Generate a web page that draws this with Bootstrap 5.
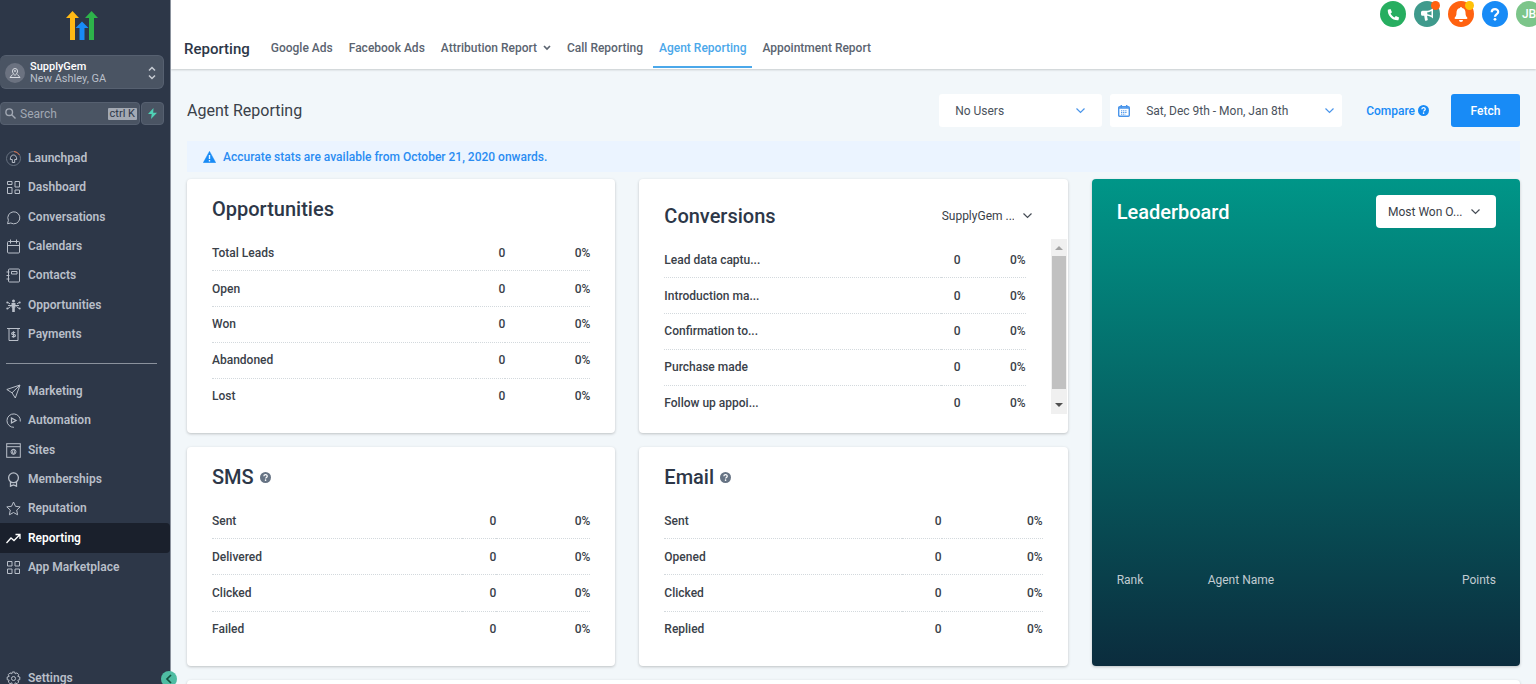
<!DOCTYPE html>
<html lang="en">
<head>
<meta charset="utf-8">
<meta name="viewport" content="width=device-width, initial-scale=1">
<title>Agent Reporting</title>
<link href="https://cdn.jsdelivr.net/npm/bootstrap@5.3.0/dist/css/bootstrap.min.css" rel="stylesheet">
<style>
  body { font-family: Roboto, "Liberation Sans", sans-serif; font-size: 12px; line-height: 16px; color: #3a4149; background: #f2f7fa; }
  svg { display: block; flex: none; }
  button, select, input { font: inherit; }
  .app-shell { height: 100vh; overflow: hidden; }

  /* Sidebar */
  .side { width: 171px; flex: none; background: #2d3748; border-right: 1px solid #8b929d; color: #b9bfc9; position: relative; }
  .side-logo { padding: 11px 7px 15px 0; }
  .side-box { background: #4a5463; border: 1px solid #566070; }
  .account { width: 164px; height: 34px; border-radius: 6px; border-left: 0; color: #b9bfc9; line-height: 12px; padding: 1px 7px 0 5px; text-align: left; gap: 5px; }
  .account b { color: #fff; font-weight: 500; font-size: 11px; }
  .account small { font-size: 11px; }
  .account-pin { width: 20px; height: 20px; border-radius: 50%; background: #6b7280; }
  .search-wrap { width: 164px; margin-top: 13px; gap: 1px; }
  .search-box { height: 23px; border-radius: 4px; padding: 0 2px 0 4px; min-width: 0; }
  .search-box input { min-width: 0; width: 10px; background: none; border: 0; color: #fff; padding: 0 0 0 4px; outline: 0; }
  .search-box input::placeholder { color: #a1a8b3; opacity: 1; }
  .search-box kbd { background: #a3a9b3; color: #2d3748; font: 400 11px/12px Roboto, sans-serif; padding: 0 2px; border-radius: 1px; }
  .bolt { width: 23px; height: 23px; border-radius: 4px; color: #4fd1b5; padding: 0; }
  .side-list { display: grid; grid-auto-rows: 1fr; height: 206px; }
  .side-main { margin-top: 18px; }
  .side-link { color: #b9bfc9; font-weight: 600; text-decoration: none; padding: 0 6px; gap: 7px; border-radius: 0 4px 4px 0; }
  .side-link:hover { color: #fff; }
  .side-link.current { background: #1a202c; color: #fff; }
  .side-link svg { width: 15px; height: 15px; margin-top: 1px; fill: none; stroke: currentColor; stroke-width: 1; }
  .side-rule { margin: 14px 13px 12px 6px; border-top: 1px solid #8b929d; opacity: 1; }
  .side-foot { height: 21px; overflow: visible; }
  .side-foot .side-link { height: 29px; }
  .collapse-btn { position: absolute; right: -7px; bottom: -3px; width: 16px; height: 16px; border-radius: 50%; border: 0; background: #4fbda3; color: #12513f; padding: 0; z-index: 2; }

  /* Header */
  .top-head { background: #fff; box-shadow: 0 1px 2px rgba(0,0,0,.18); height: 69px; }
  .quick { gap: 8px; padding-top: 1px; margin-right: -6px; height: 29px; }
  .quick-btn { width: 26px; height: 26px; border: 0; border-radius: 50%; padding: 0; color: #fff; position: relative; flex: none; }
  .quick-btn i { position: absolute; right: 0; top: 0; width: 9px; height: 9px; border-radius: 50%; }
  .bg-call { background: #27ae60; } .bg-news { background: #3f9a8c; } .bg-bell { background: #ff6210; } .bg-help { background: #188bf6; } .bg-user { background: #7cc58a; }
  .tabs { height: 39px; padding-left: 13px; gap: 4px; }
  .tabs h1 { font-size: 15px; line-height: 18px; font-weight: 500; color: #2d3748; margin: 0 11px 0 0; }
  .tab-link { height: 100%; padding: 0 6px; color: #5b6470; font-weight: 500; text-decoration: none; border: 0; background: none; border-bottom: 2px solid transparent; gap: 6px; }
  .tab-link.current { color: #4ba8ea; border-color: #4ba8ea; }

  /* Page */
  .page { padding: 25px 16px 0 16px; }
  .page h2 { font-size: 16px; line-height: 20px; font-weight: 400; color: #3a4149; }
  .filter { height: 33px; border: 0; border-radius: 3px; background-color: #fff; color: #4a525c; font-size: 12px; text-align: left; }
  .filter-users { width: 163px; padding: 0 36px 0 16px; margin-right: 8px; background-size: 11px 11px; background-position: right 16px center; }
  .filter-date { width: 232px; padding: 0 7px 0 8px; margin-right: 24px; }
  .arrow-blue { background-image: url("data:image/svg+xml,%3csvg xmlns='http://www.w3.org/2000/svg' viewBox='0 0 11 11'%3e%3cpath d='M1.5 3.5l4 4 4-4' fill='none' stroke='%234a95ea' stroke-width='1.2'/%3e%3c/svg%3e"); }
  .arrow-dark { background-image: url("data:image/svg+xml,%3csvg xmlns='http://www.w3.org/2000/svg' viewBox='0 0 11 11'%3e%3cpath d='M1.5 3.5l4 4 4-4' fill='none' stroke='%23454c55' stroke-width='1.2'/%3e%3c/svg%3e"); }
  .compare { color: #188bf6; font-weight: 500; text-decoration: none; margin-right: 22px; gap: 3px; }
  .fetch { width: 69px; height: 33px; border: 0; border-radius: 3px; background: #188bf6; color: #fff; font-weight: 500; }
  .notice { margin: 14px 0 7px; height: 31px; padding: 0 16px; gap: 7px; background: #ebf4ff; color: #2a8cf2; font-weight: 500; }
  .tiles { --bs-gutter-x: 24px; --bs-gutter-y: 14px; }
  .tile { background: #fff; border-radius: 4px; box-shadow: 0 1px 3px rgba(0,0,0,.22); padding: 18px 25px 20px; height: 100%; }
  .tile h3 { font-size: 20px; line-height: 24px; font-weight: 500; color: #2d3748; margin: 0; }
  .tile-title { margin-bottom: 15px; gap: 6px; }
  .stats { width: 100%; font-weight: 500; }
  .stats th { font-weight: 500; }
  .stats th, .stats td { padding: 0; vertical-align: middle; }
  .stats tr + tr > * { border-top: 1px dotted #d3d9dd; }
  .stats td { text-align: right; }
  .five { height: 177px; } .four { height: 142px; }
  .w-a td:last-child { width: 85px; } .w-b td:last-child { width: 94px; } .w-c td:last-child { width: 65px; } .w-d td:last-child { width: 101px; }
  .tile-conv { padding: 20px 1px 0 25px; }
  .conv-head { padding-right: 33px; height: 33px; margin-bottom: 7px; }
  .pick { width: 120px; height: 33px; border: 0; border-radius: 4px; background-color: #fff; color: #3a4149; font-size: 12px; padding: 0 34px 0 12px; background-size: 11px 11px; background-position: right 15px center; }
  .pick-plain { width: 94px; background-position: right 1px center; padding: 0 20px 0 2px; }
  .conv-scroll { height: 175px; overflow: hidden; gap: 25px; }
  .conv-scroll .stats { margin-top: 4px; }
  .bar-track { width: 16px; height: 175px; background: #f0f0f0; flex: none; }
  .bar-thumb { width: 14px; height: 133px; background: #c1c1c1; }
  .leader { background: linear-gradient(#009688, #0b2c3d); color: #fff; padding: 16px 24px 78px 25px; }
  .leader h3 { color: #fff; }
  .leader-table { width: 100%; }
  .leader-table th { font-weight: 400; padding: 0; color: #c1ccd2; }
</style>
</head>
<body>
<svg class="d-none" aria-hidden="true">
  <symbol id="q" viewBox="0 0 16 16"><circle cx="8" cy="8" r="8" fill="currentColor"/><path d="M5.6 6.2c.1-3 4.9-3 4.9-.1 0 1.8-2.3 1.7-2.3 3.4" fill="none" stroke="#fff" stroke-width="1.8"/><circle cx="8.1" cy="11.9" r="1.2" fill="#fff"/></symbol>
</svg>
<div class="app-shell d-flex">
  <aside class="side d-flex flex-column">
    <div class="side-logo d-flex justify-content-center">
      <svg width="34" height="29" viewBox="0 0 34 29" role="img" aria-label="Logo">
        <path d="M5 29V7H1L7.500 0 14 7h-4v22z" fill="#ffb914"/><path d="M24 29V7h-4L26.500 0 33 7h-4v22z" fill="#2db34a"/><path d="M14.500 29V17H10.500L17 10.500 23.500 17h-4v12z" fill="#188bf6"/>
      </svg>
    </div>
    <button type="button" class="account side-box d-flex align-items-center">
      <span class="account-pin d-flex align-items-center justify-content-center"><svg width="12" height="12" viewBox="0 0 12 12" fill="none" stroke="#d8dce2"><path d="M6 8.500C4 6.500 3.500 5.500 3.500 4a2.500 2.500 0 0 1 5 0C8.500 5.500 8 6.500 6 8.500z"/><circle cx="6" cy="4" r=".6"/><path d="M3.500 7.500L1 10.500h10L8.500 7.500"/></svg></span>
      <span class="d-flex flex-column flex-fill"><b>SupplyGem</b><small>New Ashley, GA</small></span>
      <svg width="8" height="14" viewBox="0 0 8 14" fill="none" stroke="#c6cbd3" stroke-width="1.500"><path d="M1 4.500l3-3 3 3M1 9.500l3 3 3-3"/></svg>
    </button>
    <div class="search-wrap d-flex">
      <label class="search-box side-box d-flex align-items-center flex-fill">
        <svg width="11" height="11" viewBox="0 0 11 11" fill="none" stroke="#a1a8b3" stroke-width="1.400"><circle cx="4.200" cy="4.200" r="3.300"/><path d="M6.700 6.700l3.800 3.800"/></svg>
        <input type="text" class="flex-fill" placeholder="Search" aria-label="Search"><kbd>ctrl K</kbd>
      </label>
      <button type="button" class="bolt side-box d-flex align-items-center justify-content-center" aria-label="Quick actions"><svg width="11" height="11" viewBox="0 0 11 11" fill="currentColor"><path d="M6.500 0L1 6h3.700l-.7 5L10 4.700H6.200z"/></svg></button>
    </div>
    <nav class="d-flex flex-column flex-fill" aria-label="Main">
      <div class="side-list side-main">
        <a href="#" class="side-link d-flex align-items-center"><svg viewBox="0 0 15 15"><circle cx="7.500" cy="7.500" r="7" stroke="#66707f"/><path d="M8 .5a7 7 0 0 1 5.500 3.500" stroke="#d9714a"/><path d="M6.300 11.500V8.500H4.300c0-3 1.300-4.500 3.200-4.500s3.200 1.500 3.200 4.500H8.700v3z"/></svg>Launchpad</a>
        <a href="#" class="side-link d-flex align-items-center"><svg viewBox="0 0 15 15" stroke-width="1.200"><path d="M1.500 1.500h4.500v3h-4.500zM9 1.500h4.500v5.500h-4.500zM1.500 7.500h4.500v6h-4.500zM9 10h4.500v3.500h-4.500z"/></svg>Dashboard</a>
        <a href="#" class="side-link d-flex align-items-center"><svg viewBox="0 0 15 15"><path d="M1.500 13.700l.9-3.300A6 6 0 1 1 4.800 13z"/></svg>Conversations</a>
        <a href="#" class="side-link d-flex align-items-center"><svg viewBox="0 0 15 15"><rect x="1.500" y="2.500" width="12" height="11.500" rx="1"/><path d="M1.500 6.500h12M4.500.5v4M10.500.5v4"/></svg>Calendars</a>
        <a href="#" class="side-link d-flex align-items-center"><svg viewBox="0 0 15 15"><rect x="2.500" y="1" width="11" height="13" rx="1"/><path d="M5.500 3.500h5.500v2.500H5.500zM.5 4h3M.5 7.500h3M.5 11h3"/></svg>Contacts</a>
        <a href="#" class="side-link d-flex align-items-center"><svg viewBox="0 0 15 15"><g fill="currentColor" stroke="none"><circle cx="7.500" cy="3" r="1.500"/><path d="M5.500 5h4v4.500h-.7V14H6.200V9.500h-.7z"/><circle cx="1.300" cy="4.500" r="1"/><circle cx="1.300" cy="10.500" r="1"/><circle cx="13.700" cy="4.500" r="1"/><circle cx="13.700" cy="10.500" r="1"/></g><path d="M2 7.500h11M2 10.500l2.500-2M13 10.500l-2.500-2M2 4.500l2 1.500M13 4.500l-2 1.500"/></svg>Opportunities</a>
        <a href="#" class="side-link d-flex align-items-center"><svg viewBox="0 0 15 15"><path d="M1 1.500h13M3 1.500v12h9v-12"/><path d="M9.200 5.500H6.700a1 1 0 0 0 0 2h1.600a1 1 0 0 1 0 2.200H5.800M7.500 4.300v6.500" stroke-width="1.200"/></svg>Payments</a>
      </div>
      <hr class="side-rule">
      <div class="side-list">
        <a href="#" class="side-link d-flex align-items-center"><svg viewBox="0 0 15 15"><path d="M14 1L.8 5.500l5.200 3.300L9.300 14zM14 1L6 8.800"/></svg>Marketing</a>
        <a href="#" class="side-link d-flex align-items-center"><svg viewBox="0 0 15 15"><path d="M8 14.300A6.700 6.700 0 1 1 14.300 8.500"/><path d="M5.500 5l4.500 2.500-4.500 2.500z" stroke-width="1.300"/></svg>Automation</a>
        <a href="#" class="side-link d-flex align-items-center"><svg viewBox="0 0 15 15"><rect x=".7" y=".7" width="13.600" height="13.600"/><path d="M.7 3.700h13.600"/><circle cx="7.500" cy="8.800" r="2.500"/><path d="M7.500 6.300c-1.300 1.500-1.300 3.500 0 5 1.300-1.500 1.300-3.500 0-5z"/></svg>Sites</a>
        <a href="#" class="side-link d-flex align-items-center"><svg viewBox="0 0 15 15"><circle cx="7.500" cy="5.800" r="4.900" stroke-width="1.300"/><path d="M4.500 10v4.200l3-1.200 3 1.200V10" stroke-width="1.300"/></svg>Memberships</a>
        <a href="#" class="side-link d-flex align-items-center"><svg viewBox="0 0 15 15"><path d="M7.500 1l2 4.300 4.700.6-3.500 3.200.9 4.700-4.100-2.300-4.100 2.300.9-4.700L.8 5.900l4.700-.6z"/></svg>Reputation</a>
        <a href="#" class="side-link current d-flex align-items-center" aria-current="page"><svg viewBox="0 0 15 15"><path d="M.5 12l4.500-5 3 2.500L14 3.500M9.500 3.500H14V8" stroke-width="1.300"/></svg>Reporting</a>
        <a href="#" class="side-link d-flex align-items-center"><svg viewBox="0 0 15 15"><path d="M1.500 1.500h4.500v4.500h-4.500zM9 1.500h4.500v4.500h-4.500zM1.500 9h4.500v4.500h-4.500zM9 9h4.500v4.500h-4.500z"/></svg>App Marketplace</a>
      </div>
      <div class="side-foot mt-auto">
        <a href="#" class="side-link d-flex align-items-center"><svg viewBox="0 0 15 15"><circle cx="7.500" cy="7.500" r="2"/><path d="M6.300 1h2.400l.5 1.800 1.700-.9 1.800 1.700-.9 1.800 2 .6v2.700l-2 .5.9 1.800-1.700 1.700-1.800-.9-.5 1.900H6.300l-.5-1.900-1.800.9L2.300 11l.9-1.800-2-.5V6l2-.6-.9-1.800L4 1.900l1.800.9z"/></svg>Settings</a>
      </div>
    </nav>
    <button type="button" class="collapse-btn d-flex align-items-center justify-content-center" aria-label="Collapse sidebar"><svg width="8" height="10" viewBox="0 0 8 10" fill="none" stroke="currentColor" stroke-width="1.700"><path d="M6 1L2 5l4 4"/></svg></button>
  </aside>

  <main class="flex-fill overflow-hidden">
    <header class="top-head">
      <div class="quick d-flex justify-content-end">
        <button type="button" class="quick-btn bg-call d-flex align-items-center justify-content-center" aria-label="Call"><svg width="13" height="13" viewBox="0 0 13 13" fill="currentColor"><path d="M.8 1.700L3.500.9 5 4.200 3.600 5.500c.8 1.700 2.200 3.100 3.900 3.900L8.800 8l3.300 1.400-.7 2.800C5.500 12.700.3 7.500.8 1.700z"/></svg></button>
        <button type="button" class="quick-btn bg-news d-flex align-items-center justify-content-center" aria-label="Announcements"><svg width="15" height="13" viewBox="0 0 15 13" fill="currentColor"><path d="M13 0v10.500c-2-2-4-2.600-6-2.700l.8 4.200c-1 .8-2 .8-2.800.5L4.200 7.800H2.500A1.500 1.500 0 0 1 1 6.300v-2a1.500 1.500 0 0 1 1.500-1.500H6c2.500 0 5-.8 7-2.800zM11.500 3C10 4 8.500 4.300 7.300 4.300v2c1.500.1 3 .5 4.200 1.300z" fill-rule="evenodd"/></svg><i class="bg-bell"></i></button>
        <button type="button" class="quick-btn bg-bell d-flex align-items-center justify-content-center" aria-label="Notifications"><svg width="14" height="15" viewBox="0 0 14 15" fill="currentColor"><path d="M7 0a1 1 0 0 1 1 1c2.300.4 3.500 2.300 3.500 4.500 0 3 .8 4.200 1.700 5 .5.700.1 1.500-.7 1.500h-11c-.8 0-1.200-.8-.7-1.500.9-.8 1.700-2 1.700-5C2.500 3.300 3.700 1.400 6 1a1 1 0 0 1 1-1zM5 13h4a2 2 0 0 1-4 0z"/></svg><i class="bg-warning"></i></button>
        <button type="button" class="quick-btn bg-help d-flex align-items-center justify-content-center" aria-label="Help"><svg width="10" height="13" viewBox="0 0 10 13"><path d="M1.700 4.200C1.800.2 8.200.3 8.200 3.900 8.200 6.200 5 6 5 8.800" fill="none" stroke="#fff" stroke-width="2.200"/><circle cx="5" cy="11.300" r="1.400" fill="#fff"/></svg></button>
        <button type="button" class="quick-btn bg-user fw-medium">JB</button>
      </div>
      <nav class="tabs d-flex align-items-center" aria-label="Reports">
        <h1>Reporting</h1>
        <a href="#" class="tab-link d-flex align-items-center">Google Ads</a>
        <a href="#" class="tab-link d-flex align-items-center">Facebook Ads</a>
        <button type="button" class="tab-link d-flex align-items-center">Attribution Report<svg width="8" height="6" viewBox="0 0 8 6" fill="none" stroke="currentColor" stroke-width="1.700"><path d="M1 1l3 3 3-3"/></svg></button>
        <a href="#" class="tab-link d-flex align-items-center">Call Reporting</a>
        <a href="#" class="tab-link current d-flex align-items-center" aria-current="page">Agent Reporting</a>
        <a href="#" class="tab-link d-flex align-items-center">Appointment Report</a>
      </nav>
    </header>

    <div class="page">
      <div class="d-flex align-items-center">
        <h2 class="m-0 me-auto">Agent Reporting</h2>
        <select class="form-select filter filter-users arrow-blue" aria-label="Users"><option>No Users</option></select>
        <button type="button" class="filter filter-date d-flex align-items-center">
          <svg width="12" height="12" viewBox="0 0 12 12" fill="none" stroke="#4a95ea"><rect x=".7" y="1.800" width="10.600" height="9.500" rx="1" stroke-width="1.400"/><path d="M1 3h10M3.300 0v3M8.700 0v3" stroke-width="1.500"/><path d="M3 5.800h6M3 7.500h6M3 9.200h4.500" stroke-dasharray="1.300 .8"/></svg>
          <span class="ms-3 me-auto">Sat, Dec 9th - Mon, Jan 8th</span>
          <svg width="11" height="11" viewBox="0 0 11 11" fill="none" stroke="#4a95ea" stroke-width="1.200"><path d="M1.500 3.500l4 4 4-4"/></svg>
        </button>
        <a href="#" class="compare d-flex align-items-center">Compare<svg width="11" height="11"><use href="#q"/></svg></a>
        <button type="button" class="fetch">Fetch</button>
      </div>

      <div class="notice d-flex align-items-center" role="status">
        <svg width="13" height="12" viewBox="0 0 13 12"><path d="M6.500.3L12.800 11.700H.2z" fill="#188bf6" stroke="#188bf6" stroke-width=".4" stroke-linejoin="round"/><path d="M6.500 4v4M6.500 9v1.500" stroke="#ebf4ff" stroke-width="1.400"/></svg>
        Accurate stats are available from October 21, 2020 onwards.
      </div>

      <div class="row tiles">
        <div class="col-8">
          <div class="row tiles">
            <section class="col-6">
              <div class="tile">
                <div class="tile-title"><h3>Opportunities</h3></div>
                <table class="stats five w-a">
                  <tr><th scope="row">Total Leads</th><td>0</td><td>0%</td></tr>
                  <tr><th scope="row">Open</th><td>0</td><td>0%</td></tr>
                  <tr><th scope="row">Won</th><td>0</td><td>0%</td></tr>
                  <tr><th scope="row">Abandoned</th><td>0</td><td>0%</td></tr>
                  <tr><th scope="row">Lost</th><td>0</td><td>0%</td></tr>
                </table>
              </div>
            </section>
            <section class="col-6">
              <div class="tile tile-conv">
                <div class="conv-head d-flex align-items-center justify-content-between">
                  <h3>Conversions</h3>
                  <select class="form-select pick pick-plain arrow-dark" aria-label="Pipeline"><option>SupplyGem ...</option></select>
                </div>
                <div class="conv-scroll d-flex">
                  <table class="stats five w-c">
                    <tr><th scope="row">Lead data captu...</th><td>0</td><td>0%</td></tr>
                    <tr><th scope="row">Introduction ma...</th><td>0</td><td>0%</td></tr>
                    <tr><th scope="row">Confirmation to...</th><td>0</td><td>0%</td></tr>
                    <tr><th scope="row">Purchase made</th><td>0</td><td>0%</td></tr>
                    <tr><th scope="row">Follow up appoi...</th><td>0</td><td>0%</td></tr>
                  </table>
                  <div class="bar-track d-flex flex-column align-items-center" aria-hidden="true">
                    <svg width="16" height="17" viewBox="0 0 16 17"><path d="M4 11l4-4 4 4z" fill="#a3a3a3"/></svg>
                    <div class="bar-thumb"></div>
                    <svg class="mt-auto" width="16" height="17" viewBox="0 0 16 17"><path d="M4 6l4 4 4-4z" fill="#505050"/></svg>
                  </div>
                </div>
              </div>
            </section>
            <section class="col-6">
              <div class="tile">
                <div class="tile-title d-flex align-items-center"><h3>SMS</h3><svg width="11" height="11" color="#667384"><use href="#q"/></svg></div>
                <table class="stats four w-b">
                  <tr><th scope="row">Sent</th><td>0</td><td>0%</td></tr>
                  <tr><th scope="row">Delivered</th><td>0</td><td>0%</td></tr>
                  <tr><th scope="row">Clicked</th><td>0</td><td>0%</td></tr>
                  <tr><th scope="row">Failed</th><td>0</td><td>0%</td></tr>
                </table>
              </div>
            </section>
            <section class="col-6">
              <div class="tile">
                <div class="tile-title d-flex align-items-center"><h3>Email</h3><svg width="11" height="11" color="#667384"><use href="#q"/></svg></div>
                <table class="stats four w-d">
                  <tr><th scope="row">Sent</th><td>0</td><td>0%</td></tr>
                  <tr><th scope="row">Opened</th><td>0</td><td>0%</td></tr>
                  <tr><th scope="row">Clicked</th><td>0</td><td>0%</td></tr>
                  <tr><th scope="row">Replied</th><td>0</td><td>0%</td></tr>
                </table>
              </div>
            </section>
          </div>
        </div>
        <section class="col-4">
          <div class="tile leader d-flex flex-column">
            <div class="d-flex align-items-center justify-content-between">
              <h3>Leaderboard</h3>
              <select class="form-select pick arrow-dark" aria-label="Leaderboard metric"><option>Most Won O...</option></select>
            </div>
            <table class="leader-table mt-auto">
              <colgroup><col style="width:24%"><col><col></colgroup>
              <tr><th scope="col">Rank</th><th scope="col">Agent Name</th><th scope="col" class="text-end">Points</th></tr>
            </table>
          </div>
        </section>
        <section class="col-12"><div class="tile"></div></section>
      </div>
    </div>
  </main>
</div>
<script src="https://cdn.jsdelivr.net/npm/bootstrap@5.3.0/dist/js/bootstrap.bundle.min.js"></script>
</body>
</html>
